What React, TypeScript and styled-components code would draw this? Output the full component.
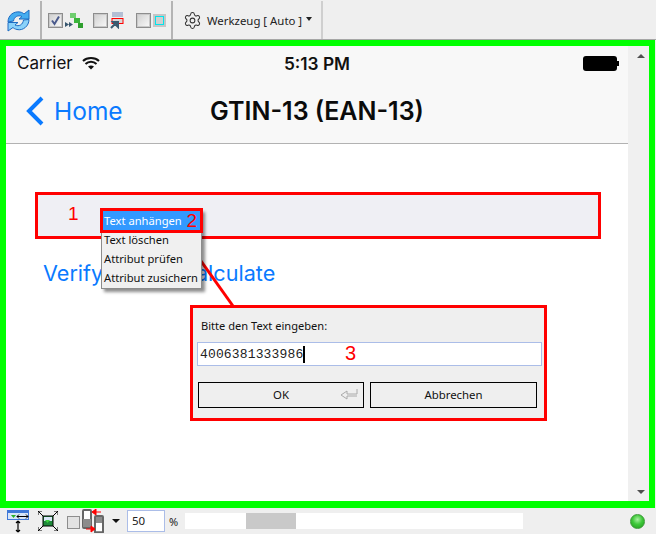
import styled, { createGlobalStyle } from 'styled-components';
import { Settings } from 'lucide-react';

const GlobalStyle = createGlobalStyle`
  html, body { margin: 0; padding: 0; }
  body { width: 656px; height: 534px; overflow: hidden; background: #efefef; }
`;

const winFont = `"Noto Sans", "Open Sans", sans-serif`;
const phoneFont = `Inter, "Liberation Sans", sans-serif`;

const Page = styled.div`
  width: 656px;
  height: 534px;
  display: flex;
  flex-direction: column;
  background: #efefef;
  font-family: ${winFont};
`;

const Toolbar = styled.div`
  display: flex;
  align-items: stretch;
  flex: none;
  padding-top: 1px;
  border-bottom: 1px solid #a6a6a6;
  height: 38px;
`;

const ToolSection = styled.div<{ $w: number }>`
  width: ${p => p.$w}px;
  box-sizing: border-box;
  display: flex;
  align-items: center;
  border-right: 2px solid #b4b4b4;
  flex: none;
`;

const SyncSection = styled(ToolSection)`
  padding-left: 7px;
`;

const CheckSection = styled(ToolSection)`
  padding-left: 6px;
`;

const ToolGroup = styled.div<{ $mr: number }>`
  display: flex;
  align-items: center;
  gap: 2px;
  margin-right: ${p => p.$mr}px;
`;

const ToolCheck = styled.span`
  width: 13px;
  height: 13px;
  border: 1px solid #8d8d8d;
  outline: 1px solid #c9c9c9;
  outline-offset: -2px;
  background: linear-gradient(135deg, #cfcfcf, #fafafa);
  display: inline-flex;
  align-items: center;
  justify-content: center;
  flex: none;
`;

const ModeSection = styled(ToolSection)`
  padding-left: 10px;
  gap: 5px;
  color: #222;
  font-size: 11.4px;
  white-space: nowrap;
  border-right-color: #cfcfcf;
`;

const Caret = styled.span`
  width: 0;
  height: 0;
  border-left: 3.5px solid transparent;
  border-right: 3.5px solid transparent;
  border-top: 4px solid #222;
  margin-left: -1px;
  margin-bottom: 3px;
`;

const Frame = styled.div`
  flex: none;
  height: 455px;
  margin-right: 1px;
  border: 6px solid #00ff00;
  border-bottom-width: 7px;
  background: #fff;
  display: flex;
  position: relative;
`;

const Screen = styled.div`
  flex: 1;
  display: flex;
  flex-direction: column;
  font-family: ${phoneFont};
`;

const IosHeader = styled.div`
  height: 97px;
  flex: none;
  background: #f8f8f8;
  border-bottom: 1px solid #b2b2b2;
  display: flex;
  flex-direction: column;
`;

const StatusBar = styled.div`
  height: 34px;
  display: grid;
  grid-template-columns: 1fr auto 1fr;
  align-items: center;
  padding: 0 11px 0 11px;
  font-size: 17px;
  color: #111;
`;

const Carrier = styled.div`
  display: flex;
  align-items: center;
  gap: 9px;
`;

const Clock = styled.div`
  font-weight: 600;
  font-size: 17.3px;
`;

const Battery = styled.div`
  justify-self: end;
  width: 34px;
  height: 15px;
  border-radius: 3px;
  background: #000;
  position: relative;
  &::after {
    content: '';
    position: absolute;
    right: -2px;
    top: 5px;
    width: 2px;
    height: 5px;
    background: #000;
  }
`;

const NavBar = styled.div`
  flex: 1;
  position: relative;
  display: flex;
  align-items: center;
  justify-content: center;
  padding-bottom: 2px;
`;

const BackLink = styled.div`
  position: absolute;
  left: 19px;
  top: 15px;
  display: flex;
  align-items: center;
  gap: 9px;
  font-size: 24.5px;
  color: #0a7aff;
`;

const NavTitle = styled.div`
  font-size: 25px;
  font-weight: 600;
  color: #0b0b0b;
`;

const Body = styled.div`
  flex: 1;
  position: relative;
  background: #fff;
  padding: 48px 0 0 29px;
`;

const TextRow = styled.div`
  width: 560px;
  height: 41px;
  background: #efeff4;
  border: 3px solid #ff0000;
  position: relative;
`;

const RedMark = styled.span`
  font-family: "Liberation Sans", sans-serif;
  font-size: 19px;
  color: #ff0000;
  position: absolute;
`;

const MarkOne = styled(RedMark)`
  left: 30px;
  top: 8px;
`;

const Actions = styled.div`
  display: flex;
  gap: 77px;
  margin: 21px 0 0 8px;
  font-size: 21.6px;
  color: #0a7aff;
`;

const ContextMenu = styled.div`
  position: absolute;
  left: 95px;
  top: 65px;
  width: 101px;
  height: 80px;
  box-sizing: border-box;
  background: #f0f0f0;
  border: 1px solid #8c8c8c;
  box-shadow: 3px 3px 3px rgba(0, 0, 0, 0.45);
  font-family: ${winFont};
  font-size: 11.2px;
  color: #111;
  padding-top: 21px;
`;

const MenuItem = styled.div`
  height: 19px;
  line-height: 18px;
  padding-left: 2px;
  white-space: nowrap;
`;

const MenuHighlight = styled.div`
  position: absolute;
  left: -2px;
  top: -2px;
  width: 103px;
  height: 25px;
  box-sizing: border-box;
  border: 3px solid #ff0000;
  background: #3399ff;
  color: #fff;
  line-height: 19px;
  padding-left: 1px;
  white-space: nowrap;
`;

const MarkTwo = styled(RedMark)`
  right: 3px;
  top: -2px;
  line-height: 24px;
`;

const Connector = styled.svg`
  position: absolute;
  left: 170px;
  top: 82px;
  overflow: visible;
`;

const Dialog = styled.div`
  position: absolute;
  left: 184px;
  top: 161px;
  width: 357px;
  height: 116px;
  box-sizing: border-box;
  background: #efefef;
  border: 3px solid #ff0000;
  padding: 10px 2px 0 4px;
  font-family: ${winFont};
  font-size: 11.1px;
  color: #111;
`;

const DialogLabel = styled.div`
  padding-left: 4px;
  height: 24px;
  line-height: 16px;
`;

const DialogInput = styled.div`
  height: 24px;
  box-sizing: border-box;
  border: 1px solid #abbde8;
  background: #fff;
  display: flex;
  align-items: center;
  padding-left: 2px;
  position: relative;
  font-family: "Liberation Mono", monospace;
  font-size: 13px;
  color: #222;
  letter-spacing: 0.15px;
`;

const Cursor = styled.span`
  width: 2px;
  height: 17px;
  background: #000;
`;

const MarkThree = styled(RedMark)`
  left: 147px;
  top: -1px;
  font-size: 20px;
`;

const DialogButtons = styled.div`
  display: flex;
  gap: 6px;
  margin: 16px 0 0 1px;
`;

const DialogButton = styled.div<{ $w: number }>`
  width: ${p => p.$w}px;
  height: 26px;
  box-sizing: border-box;
  border: 1px solid #000;
  background: #efefef;
  font-size: 11.4px;
  padding-bottom: 2px;
  display: flex;
  align-items: center;
  justify-content: center;
  position: relative;
`;

const EnterIcon = styled.svg`
  position: absolute;
  right: 5px;
  top: 6px;
`;

const Scrollbar = styled.div`
  width: 21px;
  flex: none;
  background: #f0f0f0;
  display: flex;
  flex-direction: column;
  align-items: flex-end;
  padding-right: 1px;
  box-sizing: border-box;
`;

const ScrollArrow = styled.div<{ $down?: boolean }>`
  width: 14px;
  height: 19px;
  flex: none;
  display: flex;
  align-items: center;
  justify-content: center;
  &::after {
    content: '';
    border-left: 4px solid transparent;
    border-right: 4px solid transparent;
    ${p => (p.$down ? 'border-top: 4px solid #505050;' : 'border-bottom: 4px solid #505050;')}
  }
`;

const ScrollTrack = styled.div`
  flex: 1;
  width: 14px;
`;

const ScrollThumb = styled.div`
  height: 171px;
  background: #cdcdcd;
`;

const BottomBar = styled.div`
  flex: 1;
  display: flex;
  align-items: center;
  padding: 0 11px 0 7px;
`;

const BottomIcon = styled.svg<{ $ml?: number }>`
  flex: none;
  margin-left: ${p => p.$ml ?? 0}px;
`;

const BottomCaret = styled.span`
  width: 0;
  height: 0;
  flex: none;
  margin: 0 7px 0 8px;
  border-left: 4px solid transparent;
  border-right: 4px solid transparent;
  border-top: 4px solid #111;
`;

const ZoomInput = styled.div`
  width: 38px;
  height: 22px;
  box-sizing: border-box;
  border: 1px solid #abbde8;
  background: #fff;
  font-size: 11.5px;
  color: #222;
  line-height: 20px;
  padding-left: 4px;
  flex: none;
`;

const Percent = styled.span`
  font-size: 11px;
  color: #222;
  margin-left: 4px;
  width: 16px;
  flex: none;
`;

const ZoomSlider = styled.div`
  width: 338px;
  height: 16px;
  background: #fff;
  flex: none;
  display: flex;
  padding-left: 61px;
  box-sizing: border-box;
`;

const ZoomThumb = styled.div`
  width: 50px;
  height: 16px;
  background: #c9c9c9;
`;

const Led = styled.div`
  width: 15px;
  height: 15px;
  border-radius: 50%;
  margin-left: auto;
  background: radial-gradient(circle at 50% 35%, #a8f0a0 0%, #3fc93a 45%, #1f9a1c 100%);
  border: 1px solid #3a9a36;
  box-sizing: border-box;
`;

const SyncIcon = () => (
  <svg width="23" height="23" viewBox="0 0 23 23">
    <path d="M1 13 C1 6 7 2 13 3 C15 3.400 16 4 17 5 L22 1 V10 H12 L15 7.500 C11 5.500 7 8 6.500 12 Z" fill="#45adf0" stroke="#1e6cc2" strokeWidth="1" />
    <path d="M22 10.500 C22 17 16 22 10 20.500 C8 20 7 19.500 6 18.500 L1 22 V13.500 H11 L8 16 C12 18 16 15.500 16.500 11 Z" fill="#8ad2fa" stroke="#1e6cc2" strokeWidth="1" />
  </svg>
);

const TickBox = () => (
  <svg width="11" height="11" viewBox="0 0 11 11">
    <path d="M2 5.500 L4.500 9 L9 1.500" fill="none" stroke="#4a5a8c" strokeWidth="2" />
  </svg>
);

const ChainIcon = () => (
  <svg width="18" height="15" viewBox="0 0 18 15">
    <path d="M0 9 L4 11.500 L0 14 Z M4 9 L8 11.500 L4 14 Z" fill="#37566e" />
    <rect x="5" y="0" width="6" height="5" fill="#6fce6f" />
    <rect x="9" y="5" width="6" height="5" fill="#3bb43b" />
    <rect x="13" y="10" width="5" height="5" fill="#2e9e2e" />
  </svg>
);

const LayerIcon = () => (
  <svg width="14" height="17" viewBox="0 0 14 17">
    <rect x="2" y="0" width="11" height="5" fill="#b3bfd4" />
    <rect x="2" y="6.500" width="11" height="5" fill="#d8d8d8" stroke="#ff0000" strokeWidth="1" />
    <path d="M1 16 L6 11 M3 10 L8 10 L8 15 Z" stroke="#3a5a70" strokeWidth="2" fill="#3a5a70" />
  </svg>
);

const FrameIcon = () => (
  <svg width="13" height="13" viewBox="0 0 13 13">
    <rect width="13" height="13" fill="#c6c6c6" />
    <rect x="2.500" y="2.500" width="8" height="8" fill="#cfcfcf" stroke="#00e5ee" strokeWidth="1" />
  </svg>
);

const Wifi = () => (
  <svg width="18" height="14" viewBox="0 0 18 14">
    <path d="M1 5 C5 1 13 1 17 5 M3.500 8 C6.500 5 11.500 5 14.500 8" fill="none" stroke="#111" strokeWidth="2" />
    <path d="M6 10.500 C8 9 10 9 12 10.500 L9 13.500 Z" fill="#111" />
  </svg>
);

export default function App() {
  return (
    <Page>
      <GlobalStyle />
      <Toolbar>
        <SyncSection $w={42}>
          <SyncIcon />
        </SyncSection>
        <CheckSection $w={131}>
          <ToolGroup $mr={10}>
            <ToolCheck>
              <TickBox />
            </ToolCheck>
            <ChainIcon />
          </ToolGroup>
          <ToolGroup $mr={12}>
            <ToolCheck />
            <LayerIcon />
          </ToolGroup>
          <ToolGroup $mr={0}>
            <ToolCheck />
            <FrameIcon />
          </ToolGroup>
        </CheckSection>
        <ModeSection $w={150}>
          <Settings size={19} strokeWidth={1.3} color="#333" />
          <span>Werkzeug [ Auto ]</span>
          <Caret />
        </ModeSection>
      </Toolbar>

      <Frame>
        <Screen>
          <IosHeader>
            <StatusBar>
              <Carrier>
                Carrier
                <Wifi />
              </Carrier>
              <Clock>5:13 PM</Clock>
              <Battery />
            </StatusBar>
            <NavBar>
              <BackLink>
                <svg width="20" height="32" viewBox="0 0 20 32">
                  <path d="M17 3 L4 16 L17 29" fill="none" stroke="#0a7aff" strokeWidth="4" />
                </svg>
                Home
              </BackLink>
              <NavTitle>GTIN-13 (EAN-13)</NavTitle>
            </NavBar>
          </IosHeader>
          <Body>
            <TextRow>
              <MarkOne>1</MarkOne>
            </TextRow>
            <Actions>
              <span>Verify</span>
              <span>Calculate</span>
            </Actions>
            <Connector width="60" height="80">
              <line x1="5" y1="7" x2="57" y2="80" stroke="#ff0000" strokeWidth="3" />
            </Connector>
            <ContextMenu>
              <MenuHighlight>
                Text anhängen
                <MarkTwo>2</MarkTwo>
              </MenuHighlight>
              <MenuItem>Text löschen</MenuItem>
              <MenuItem>Attribut prüfen</MenuItem>
              <MenuItem>Attribut zusichern</MenuItem>
            </ContextMenu>
            <Dialog>
              <DialogLabel>Bitte den Text eingeben:</DialogLabel>
              <DialogInput>
                4006381333986
                <Cursor />
                <MarkThree>3</MarkThree>
              </DialogInput>
              <DialogButtons>
                <DialogButton $w={166}>
                  OK
                  <EnterIcon width="18" height="11" viewBox="0 0 18 11">
                    <path d="M17 0 V5 H7 V2 L1 6 L7 10 V7 H17" fill="none" stroke="#aaa" strokeWidth="1" />
                  </EnterIcon>
                </DialogButton>
                <DialogButton $w={167}>Abbrechen</DialogButton>
              </DialogButtons>
            </Dialog>
          </Body>
        </Screen>
        <Scrollbar>
          <ScrollArrow />
          <ScrollThumb />
          <ScrollTrack />
          <ScrollArrow $down />
        </Scrollbar>
      </Frame>

      <BottomBar>
        <BottomIcon width="23" height="23" viewBox="0 0 23 23">
          <rect x="0" y="0" width="22" height="10" fill="#3f78d8" />
          <rect x="1" y="3" width="20" height="6" fill="#d8e6f8" />
          <path d="M4 5 H9 L6.500 8 Z" fill="#28b028" />
          <path d="M10 6.500 H21 M10 6.500 L12 4.500 M10 6.500 L12 8.500 M21 6.500 L19 4.500 M21 6.500 L19 8.500" stroke="#000" strokeWidth="1" fill="none" />
          <path d="M11 11 V22 M11 11 L9 13 M11 11 L13 13 M11 22 L9 20 M11 22 L13 20" stroke="#000" strokeWidth="1.200" fill="none" />
        </BottomIcon>
        <BottomIcon width="20" height="20" viewBox="0 0 20 20" $ml={8}>
          <rect x="5" y="5" width="10" height="10" fill="#1f8a3a" stroke="#000" />
          <rect x="6" y="6" width="8" height="4" fill="#d8e6f8" />
          <path d="M7 9 H12 L9.500 12 Z" fill="#3bd03b" />
          <path d="M0 0 L5 5 M0 0 H4 M0 0 V4 M20 0 L15 5 M20 0 H16 M20 0 V4 M0 20 L5 15 M0 20 H4 M0 20 V16 M20 20 L15 15 M20 20 H16 M20 20 V16" stroke="#000" strokeWidth="1" fill="none" />
        </BottomIcon>
        <BottomIcon width="37" height="24" viewBox="0 0 37 24" $ml={9}>
          <rect x="0.500" y="7.500" width="12" height="12" fill="#e2e2e2" stroke="#8d8d8d" />
          <rect x="16" y="1" width="8" height="18" rx="1" fill="#fff" stroke="#666" strokeWidth="2" />
          <rect x="16" y="10" width="8" height="8" fill="#8c8c8c" />
          <rect x="28" y="7" width="8" height="17" rx="1" fill="#8c8c8c" stroke="#666" strokeWidth="2" />
          <rect x="29" y="14" width="6" height="8" fill="#fff" />
          <path d="M34 3 H29 M29 3 L29 0 L25 3 L29 6 Z M19 20 H24 M24 20 L24 17 L28 20 L24 23 Z" fill="#ff0000" stroke="#ff0000" />
        </BottomIcon>
        <BottomCaret />
        <ZoomInput>50</ZoomInput>
        <Percent>%</Percent>
        <ZoomSlider>
          <ZoomThumb />
        </ZoomSlider>
        <Led />
      </BottomBar>
    </Page>
  );
}
